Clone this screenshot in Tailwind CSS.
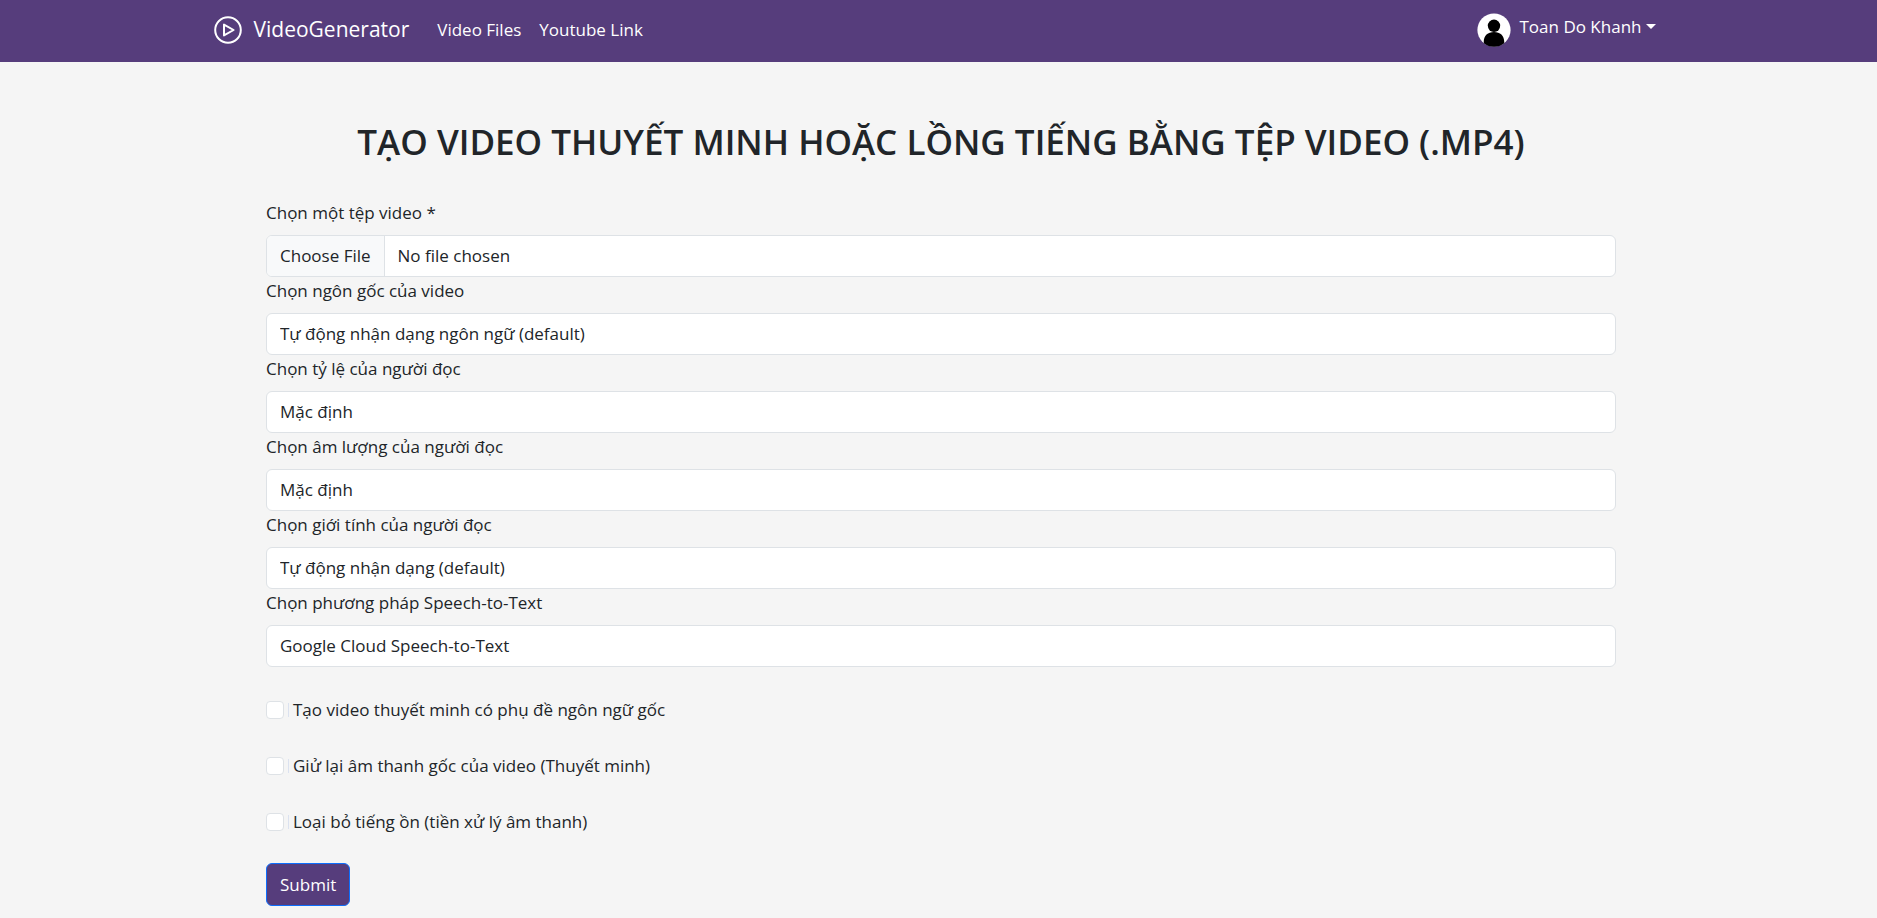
<!DOCTYPE html>
<html lang="vi">
<head>
<meta charset="utf-8">
<meta name="viewport" content="width=device-width, initial-scale=1">
<title>VideoGenerator</title>
<script src="https://cdn.jsdelivr.net/npm/@tailwindcss/browser@4"></script>
</head>
<body class="min-h-screen bg-[#f5f5f5] font-['Open_Sans','Noto_Sans',sans-serif] text-[17px] text-[#212529]">
<header class="bg-[#563d7c] text-white">
  <nav class="mx-auto flex h-[62px] max-w-[1452px] items-center px-px pb-[2px]">
    <a href="#" class="flex items-center gap-3 text-[21px]">
      <svg class="size-7" viewBox="0 0 28 28" fill="none" stroke="currentColor" stroke-width="2" stroke-linejoin="round"><circle cx="14" cy="14" r="12.8"/><path d="M10 8.600v10.800l9.600-5.400z"/></svg>
      VideoGenerator
    </a>
    <div class="ml-7 flex gap-[18px]">
      <a href="#">Video Files</a>
      <a href="#">Youtube Link</a>
    </div>
    <button type="button" class="ml-auto flex items-start gap-[9px] pr-2">
      <svg class="size-[34px]" viewBox="0 0 34 34"><circle cx="17" cy="17" r="16.6" fill="#fff"/><circle cx="17" cy="12.8" r="6.2"/><path d="M6.800 30.200c-.6-7 3.600-11.200 10.200-11.200s10.800 4.200 10.200 11.200a16.600 16.600 0 0 1-20.400 0z"/></svg>
      <span class="flex items-center gap-1 leading-[27px]">Toan Do Khanh
        <svg class="h-[5px] w-[10px]" viewBox="0 0 10 5" fill="currentColor"><path d="M0 0h10L5 5z"/></svg>
      </span>
    </button>
  </nav>
</header>
<main class="pl-[5px]">
  <div class="mx-auto max-w-[1350px] pt-[58px]">
    <h1 class="text-center text-[35px] leading-[44px] font-semibold">TẠO VIDEO THUYẾT MINH HOẶC LỒNG TIẾNG BẰNG TỆP VIDEO (.MP4)</h1>
    <form class="pt-[35px]">
      <label for="file" class="mb-[9px] block leading-[27px]">Chọn một tệp video *</label>
      <input id="file" type="file" class="block h-[42px] w-full rounded-md border border-[#dee2e6] bg-white leading-[40px] file:mr-[13px] file:h-10 file:border-r file:border-[#dee2e6] file:bg-[#f8f9fa] file:px-[13px] file:text-[#212529]">
      <label for="lang" class="mb-[9px] block leading-[27px]">Chọn ngôn gốc của video</label>
      <select id="lang" class="block h-[42px] w-full appearance-none rounded-md border border-[#dee2e6] bg-white px-[13px]"><option>Tự động nhận dạng ngôn ngữ (default)</option></select>
      <label for="rate" class="mb-[9px] block leading-[27px]">Chọn tỷ lệ của người đọc</label>
      <select id="rate" class="block h-[42px] w-full appearance-none rounded-md border border-[#dee2e6] bg-white px-[13px]"><option>Mặc định</option></select>
      <label for="volume" class="mb-[9px] block leading-[27px]">Chọn âm lượng của người đọc</label>
      <select id="volume" class="block h-[42px] w-full appearance-none rounded-md border border-[#dee2e6] bg-white px-[13px]"><option>Mặc định</option></select>
      <label for="gender" class="mb-[9px] block leading-[27px]">Chọn giới tính của người đọc</label>
      <select id="gender" class="block h-[42px] w-full appearance-none rounded-md border border-[#dee2e6] bg-white px-[13px]"><option>Tự động nhận dạng (default)</option></select>
      <label for="method" class="mb-[9px] block leading-[27px]">Chọn phương pháp Speech-to-Text</label>
      <select id="method" class="block h-[42px] w-full appearance-none rounded-md border border-[#dee2e6] bg-white px-[13px]"><option>Google Cloud Speech-to-Text</option></select>
      <div class="flex flex-col gap-[29px] pt-[29px]">
        <div class="flex items-center"><input id="subs" type="checkbox" class="size-[18px] appearance-none rounded border border-[#dee2e6] bg-white"><span class="mx-1 h-[14px] w-px bg-[#dbe2f0]"></span><label for="subs" class="leading-[27px]">Tạo video thuyết minh có phụ đề ngôn ngữ gốc</label></div>
        <div class="flex items-center"><input id="keep" type="checkbox" class="size-[18px] appearance-none rounded border border-[#dee2e6] bg-white"><span class="mx-1 h-[14px] w-px bg-[#dbe2f0]"></span><label for="keep" class="leading-[27px]">Giử lại âm thanh gốc của video (Thuyết minh)</label></div>
        <div class="flex items-center"><input id="noise" type="checkbox" class="size-[18px] appearance-none rounded border border-[#dee2e6] bg-white"><span class="mx-1 h-[14px] w-px bg-[#dbe2f0]"></span><label for="noise" class="leading-[27px]">Loại bỏ tiếng ồn (tiền xử lý âm thanh)</label></div>
      </div>
      <button type="submit" class="mt-7 block h-[43px] rounded-md border border-[#0d6efd] bg-[#563d7c] px-[13px] text-white">Submit</button>
    </form>
  </div>
</main>
</body>
</html>
